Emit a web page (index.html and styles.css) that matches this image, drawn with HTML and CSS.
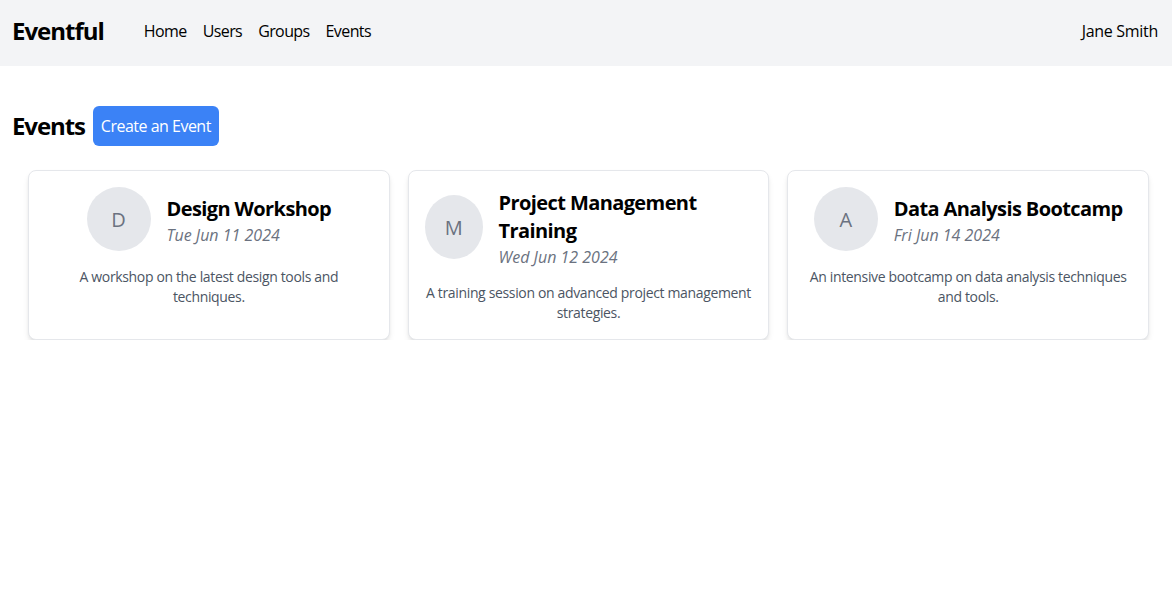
FILE: index.html
```html
<!DOCTYPE html>
<html lang="en">
<head>
<meta charset="utf-8">
<title>Eventful</title>
<link rel="stylesheet" href="styles.css">
</head>
<body>
<header class="topbar">
  <div class="brand-nav">
    <div class="brand">Eventful</div>
    <nav class="nav">
      <a href="#">Home</a>
      <a href="#">Users</a>
      <a href="#">Groups</a>
      <a href="#">Events</a>
    </nav>
  </div>
  <div class="user">Jane Smith</div>
</header>
<main class="main">
  <div class="title-row">
    <h1 class="page-title">Events</h1>
    <button class="btn">Create an Event</button>
  </div>
  <div class="cards">
    <div class="card">
      <div class="card-head">
        <div class="avatar">D</div>
        <div class="card-info">
          <h2 class="card-title">Design Workshop</h2>
          <div class="card-date">Tue Jun 11 2024</div>
        </div>
      </div>
      <p class="card-desc">A workshop on the latest design tools and techniques.</p>
    </div>
    <div class="card">
      <div class="card-head">
        <div class="avatar">M</div>
        <div class="card-info">
          <h2 class="card-title">Project Management Training</h2>
          <div class="card-date">Wed Jun 12 2024</div>
        </div>
      </div>
      <p class="card-desc">A training session on advanced project management strategies.</p>
    </div>
    <div class="card">
      <div class="card-head">
        <div class="avatar">A</div>
        <div class="card-info">
          <h2 class="card-title">Data Analysis Bootcamp</h2>
          <div class="card-date">Fri Jun 14 2024</div>
        </div>
      </div>
      <p class="card-desc">An intensive bootcamp on data analysis techniques and tools.</p>
    </div>
  </div>
</main>
</body>
</html>
```
FILE: styles.css
```css
* { box-sizing: border-box; }
body {
  margin: 0;
  font-family: "Open Sans", "Noto Sans", sans-serif;
  color: #000;
  background: #fff;
}
.topbar {
  display: flex;
  align-items: center;
  justify-content: space-between;
  height: 66px;
  padding: 0 14px 4px 12px;
  background: #f3f4f6;
}
.brand-nav {
  display: flex;
  align-items: center;
}
.brand {
  font-size: 24px;
  font-weight: 700;
  line-height: 32px;
  margin-right: 40px;
  letter-spacing: -1px;
}
.nav {
  display: flex;
  gap: 16px;
}
.nav a {
  color: #000;
  text-decoration: none;
  font-size: 16px;
  line-height: 24px;
  letter-spacing: -0.6px;
}
.user {
  font-size: 16px;
  line-height: 24px;
  letter-spacing: -0.3px;
}
.main {
  padding: 40px 23px 0 12px;
}
.title-row {
  display: flex;
  align-items: center;
  gap: 8px;
}
.page-title {
  margin: 0;
  font-size: 24px;
  font-weight: 700;
  line-height: 32px;
  letter-spacing: -1.1px;
}
.btn {
  font-family: inherit;
  font-size: 16px;
  line-height: 24px;
  padding: 8px 8px;
  border: 0;
  border-radius: 6px;
  background: #3b82f6;
  color: #fff;
  letter-spacing: -0.5px;
}
.cards {
  display: grid;
  grid-template-columns: repeat(3, 1fr);
  gap: 18px;
  margin: 24px 0 0 16px;
}
.card {
  border: 1px solid #e5e7eb;
  border-radius: 8px;
  padding: 16px;
  background: #fff;
  box-shadow: 0 4px 6px -1px rgba(0,0,0,0.1), 0 2px 4px -2px rgba(0,0,0,0.1);
}
.card-head {
  display: flex;
  align-items: center;
  justify-content: center;
  gap: 16px;
}
.avatar {
  width: 64px;
  height: 64px;
  border-radius: 50%;
  background: #e5e7eb;
  color: #6b7280;
  font-size: 20px;
  display: flex;
  align-items: center;
  justify-content: center;
}
.card-info {
  padding-top: 2px;
  margin-bottom: -2px;
}
.card-title {
  margin: 0;
  font-size: 20px;
  font-weight: 700;
  line-height: 28px;
  letter-spacing: -0.6px;
}
.card-date {
  font-size: 16px;
  font-style: italic;
  line-height: 24px;
  color: #6b7280;
  letter-spacing: 0;
}
.card-desc {
  margin: 16px 0 0;
  font-size: 14px;
  line-height: 20px;
  color: #4b5563;
  text-align: center;
  letter-spacing: -0.35px;
}
```
